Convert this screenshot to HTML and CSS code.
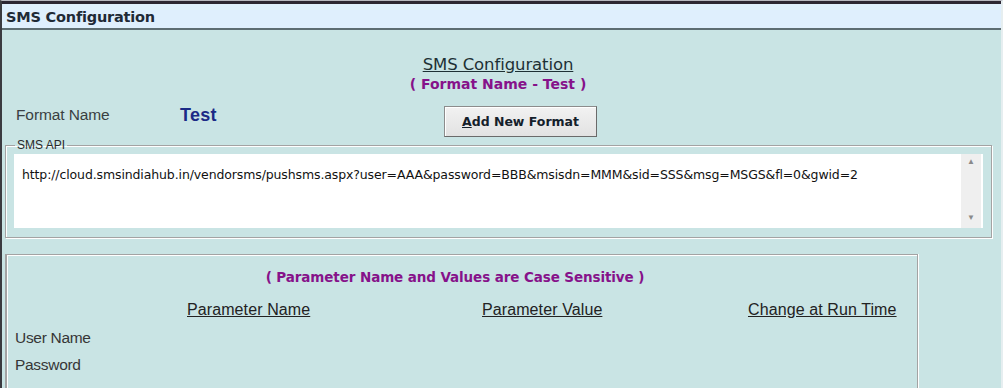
FILE: index.html
```html
<!DOCTYPE html>
<html lang="en">

<head>
    <meta charset="UTF-8">
    <meta name="viewport" content="width=device-width, initial-scale=1.0">
    <title>SMS Configuration</title>
    <link rel="stylesheet" href="styles.css">
</head>

<body>
    <div class="window">
        <div class="window-header">SMS Configuration</div>

        <div class="window-body">
            <div class="heading">
                <h2>SMS Configuration</h2>
                <div class="subtitle">( Format Name - Test )</div>
            </div>

            <div class="format-row">
                <span class="format-label">Format Name</span>
                <span class="format-value">Test</span>
                <button type="button" class="btn"><u>A</u>dd New Format</button>
            </div>

            <fieldset class="api-box">
                <legend>SMS API</legend>
                <div class="api-text">
                    <div class="api-url">http://cloud.smsindiahub.in/vendorsms/pushsms.aspx?user=AAA&amp;password=BBB&amp;msisdn=MMM&amp;sid=SSS&amp;msg=MSGS&amp;fl=0&amp;gwid=2</div>
                    <div class="scrollbar">
                        <span class="arrow">&#9650;</span>
                        <span class="arrow">&#9660;</span>
                    </div>
                </div>
            </fieldset>

            <div class="params">
                <div class="params-note">( Parameter Name and Values are Case Sensitive )</div>
                <div class="params-grid">
                    <span></span>
                    <span class="col-head">Parameter Name</span>
                    <span class="col-head">Parameter Value</span>
                    <span class="col-head">Change at Run Time</span>

                    <span class="param-label">User Name</span>
                    <span></span>
                    <span></span>
                    <span></span>

                    <span class="param-label">Password</span>
                    <span></span>
                    <span></span>
                    <span></span>
                </div>
            </div>
        </div>
    </div>
</body>

</html>
```

FILE: styles.css
```css
body {
    margin: 0;
    padding: 0;
    background-color: #c9e4e4;
    font-family: "Liberation Sans", Arial, sans-serif;
    height: 388px;
    overflow: hidden;
}

.window {
    border-top: 1px solid #b8b8c0;
    min-height: 387px;
    border-left: 2px solid #3b3b40;
    border-right: 2px solid #e6eef0;
}

.window-header {
    background-color: #dfeffd;
    border-top: 3px solid #2c2633;
    border-bottom: 2px solid #5d6d72;
    height: 24px;
    line-height: 26px;
    padding-left: 4px;
    font-family: "DejaVu Sans", Verdana, sans-serif;
    font-weight: bold;
    font-size: 14.5px;
    color: #1f2a36;
    letter-spacing: -0.2px;
}

.window-body {
    padding: 0 10px 0 3px;
}

.heading {
    padding-top: 25px;
    text-align: center;
}

.heading h2 {
    margin: 0;
    font-family: "DejaVu Sans", Verdana, sans-serif;
    font-weight: normal;
    font-size: 16.5px;
    line-height: 19px;
    color: #1d3034;
    text-decoration: underline;
    letter-spacing: -0.1px;
}

.subtitle {
    margin-top: 2px;
    font-family: "DejaVu Sans", Verdana, sans-serif;
    font-weight: bold;
    font-size: 14px;
    line-height: 17px;
    color: #86128a;
    letter-spacing: 0;
}

.format-row {
    display: flex;
    align-items: flex-start;
    margin-top: 12px;
    padding-left: 11px;
}

.format-label {
    width: 164px;
    font-size: 15.5px;
    line-height: 18px;
    padding-top: 1px;
    color: #3a3f42;
    letter-spacing: -0.1px;
}

.format-value {
    width: 264px;
    font-weight: bold;
    font-size: 18px;
    line-height: 20px;
    color: #1b2a86;
    letter-spacing: 0.3px;
}

.btn {
    width: 153px;
    height: 31px;
    margin-top: 1px;
    padding: 0;
    background: linear-gradient(#f2f2f2, #e2e2e2);
    border: 1px solid #8c8c8c;
    border-right-color: #6a6a6a;
    border-bottom-color: #6a6a6a;
    box-shadow: inset 1px 1px 0 #ffffff;
    font-family: "DejaVu Sans", Verdana, sans-serif;
    font-weight: bold;
    font-size: 12.5px;
    color: #14202a;
    cursor: pointer;
}

.api-box {
    margin: 1px 0 0 0;
    padding: 0 8px 9px 8px;
    width: 969px;
    border: 1px solid #a3a3a3;
    box-shadow: inset 1px 1px 0 #ffffff, 1px 1px 0 #ffffff;
}

.api-box legend {
    padding: 0 2px;
    margin-left: 1px;
    font-size: 12px;
    line-height: 14px;
    color: #2a2a2a;
}

.api-text {
    display: flex;
    height: 74px;
    margin-top: 2px;
    background-color: #ffffff;
}

.api-url {
    flex: 1;
    padding: 13px 0 0 8px;
    font-family: "DejaVu Sans", Verdana, sans-serif;
    font-size: 12.5px;
    line-height: 16px;
    color: #111;
    letter-spacing: -0.12px;
    white-space: nowrap;
}

.scrollbar {
    width: 20px;
    margin-right: 2px;
    background-color: #efefef;
    display: flex;
    flex-direction: column;
    justify-content: space-between;
    align-items: center;
    padding: 4px 0 6px 0;
}

.arrow {
    font-size: 8px;
    line-height: 8px;
    color: #8a8a8a;
}

.params {
    margin-top: 16px;
    width: 910px;
    height: 140px;
    border-top: 1px solid #a3a3a3;
    border-left: 2px solid #a3a3a3;
    border-right: 1px solid #a3a3a3;
    box-shadow: inset 1px 1px 0 #ffffff, 1px 0 0 #ffffff;
}

.params-note {
    padding: 14px 14px 0 0;
    text-align: center;
    font-family: "DejaVu Sans", Verdana, sans-serif;
    font-weight: bold;
    font-size: 13.5px;
    line-height: 17px;
    color: #86128a;
    letter-spacing: -0.1px;
}

.params-grid {
    display: grid;
    grid-template-columns: 172px 295px 266px 1fr;
    row-gap: 9px;
    margin-top: 15px;
    padding-left: 8px;
}

.col-head {
    font-size: 16px;
    line-height: 18px;
    color: #222;
    text-decoration: underline;
    letter-spacing: 0.1px;
}

.param-label {
    font-size: 15.5px;
    line-height: 18px;
    color: #363636;
    letter-spacing: -0.3px;
}

.params-grid > span:nth-child(5) {
    margin-top: 1px;
}
```
